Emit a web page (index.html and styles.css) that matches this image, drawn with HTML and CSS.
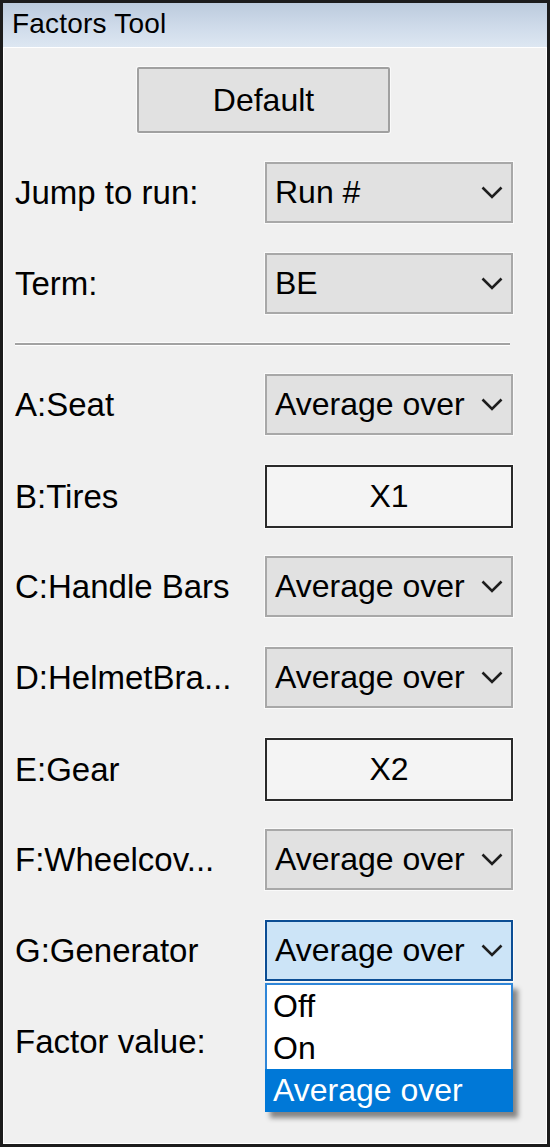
FILE: index.html
```html
<!DOCTYPE html>
<html>
<head>
<meta charset="utf-8">
<title>Factors Tool</title>
<link rel="stylesheet" href="styles.css">
</head>
<body>
<div class="window">
  <div class="titlebar">Factors Tool</div>
  <div class="panel">
    <div class="toolbar">
      <div class="btn">Default</div>
    </div>
    <div class="rows">
      <div class="row">
        <div class="label">Jump to run:</div>
        <div class="combo"><span class="value">Run #</span><svg class="chev" width="22" height="13" viewBox="0 0 22 13"><polyline points="1.5,1.5 11,11 20.5,1.5"/></svg></div>
      </div>
      <div class="row">
        <div class="label">Term:</div>
        <div class="combo"><span class="value">BE</span><svg class="chev" width="22" height="13" viewBox="0 0 22 13"><polyline points="1.5,1.5 11,11 20.5,1.5"/></svg></div>
      </div>
      <div class="sep"></div>
      <div class="row">
        <div class="label">A:Seat</div>
        <div class="combo"><span class="value">Average over</span><svg class="chev" width="22" height="13" viewBox="0 0 22 13"><polyline points="1.5,1.5 11,11 20.5,1.5"/></svg></div>
      </div>
      <div class="row">
        <div class="label">B:Tires</div>
        <div class="field">X1</div>
      </div>
      <div class="row">
        <div class="label">C:Handle Bars</div>
        <div class="combo"><span class="value">Average over</span><svg class="chev" width="22" height="13" viewBox="0 0 22 13"><polyline points="1.5,1.5 11,11 20.5,1.5"/></svg></div>
      </div>
      <div class="row">
        <div class="label">D:HelmetBra...</div>
        <div class="combo"><span class="value">Average over</span><svg class="chev" width="22" height="13" viewBox="0 0 22 13"><polyline points="1.5,1.5 11,11 20.5,1.5"/></svg></div>
      </div>
      <div class="row">
        <div class="label">E:Gear</div>
        <div class="field">X2</div>
      </div>
      <div class="row">
        <div class="label">F:Wheelcov...</div>
        <div class="combo"><span class="value">Average over</span><svg class="chev" width="22" height="13" viewBox="0 0 22 13"><polyline points="1.5,1.5 11,11 20.5,1.5"/></svg></div>
      </div>
      <div class="row">
        <div class="label">G:Generator</div>
        <div class="combo focused"><span class="value">Average over</span><svg class="chev" width="22" height="13" viewBox="0 0 22 13"><polyline points="1.5,1.5 11,11 20.5,1.5"/></svg>
          <div class="list">
            <div class="item">Off</div>
            <div class="item">On</div>
            <div class="item selected">Average over</div>
          </div>
        </div>
      </div>
      <div class="row">
        <div class="label">Factor value:</div>
        <div class="slot"></div>
      </div>
    </div>
  </div>
</div>
</body>
</html>
```
FILE: styles.css
```css
html, body {
  margin: 0;
  padding: 0;
  background: #f0f0f0;
}

body {
  font-family: "Liberation Sans", Arial, sans-serif;
  color: #000;
}

.window {
  width: 550px;
  height: 1147px;
  box-sizing: border-box;
  border: 3px solid #1c1c1c;
  display: flex;
  flex-direction: column;
  background: #f0f0f0;
}

.titlebar {
  height: 44px;
  box-sizing: border-box;
  padding: 0 0 3px 9px;
  display: flex;
  align-items: center;
  font-size: 28px;
  letter-spacing: 0.2px;
  background: linear-gradient(to bottom, #bccbdd 0%, #cfdbea 55%, #dde7f2 100%);
  flex: none;
}

.panel {
  flex: 1;
  box-shadow: inset 0 0 0 1px #ffffff;
  padding-top: 20px;
}

.toolbar {
  display: flex;
  padding-left: 134px;
  margin-bottom: 29px;
}

.btn {
  width: 253px;
  height: 66px;
  box-sizing: border-box;
  border: 2px solid #a0a0a0;
  border-radius: 2px;
  background: #e1e1e1;
  font-size: 32px;
  display: flex;
  align-items: center;
  justify-content: center;
  box-shadow: 0 0 0 1px #fafafa;
}

.rows {
  display: flex;
  flex-direction: column;
  padding-left: 12px;
}

.row {
  height: 61px;
  margin-bottom: 30px;
  display: grid;
  grid-template-columns: 250px 248px;
  align-items: center;
}

.label {
  font-size: 33px;
  white-space: nowrap;
}

.sep {
  height: 2px;
  width: 495px;
  background: #a2a2a2;
  margin: -1px 0 29px 0;
  box-shadow: 0 1px 0 #ffffff, 0 -1px 0 #fbfbfb;
}

.combo {
  position: relative;
  height: 61px;
  box-sizing: border-box;
  border: 2px solid #a8a8a8;
  background: #e1e1e1;
  display: flex;
  align-items: center;
  padding-left: 8px;
  font-size: 32px;
  box-shadow: 0 0 0 1px #fafafa;
}

.combo .value {
  width: 192px;
  white-space: nowrap;
}

.chev {
  margin-left: 14px;
  fill: none;
  stroke: #1e1e1e;
  stroke-width: 2.6;
}

.combo.focused {
  border-color: #0b4d94;
  background: #cce4f7;
}

.field {
  height: 63px;
  box-sizing: border-box;
  border: 2px solid #2a2a2a;
  background: #f4f4f4;
  display: flex;
  align-items: center;
  justify-content: center;
  font-size: 32px;
  box-shadow: 0 0 0 1px #fafafa;
}

.slot {
  height: 61px;
}

.list {
  position: absolute;
  top: 61px;
  left: -2px;
  width: 248px;
  box-sizing: border-box;
  border: 2px solid #2f86d8;
  border-bottom: none;
  background: #ffffff;
  box-shadow: 5px 6px 5px rgba(0, 0, 0, 0.45);
  z-index: 2;
}

.item {
  height: 42px;
  line-height: 42px;
  padding-left: 6px;
  font-size: 32px;
  white-space: nowrap;
}

.item.selected {
  background: #0078d7;
  color: #ffffff;
  margin: 0 -2px;
  padding-left: 8px;
  height: 43px;
}
```
